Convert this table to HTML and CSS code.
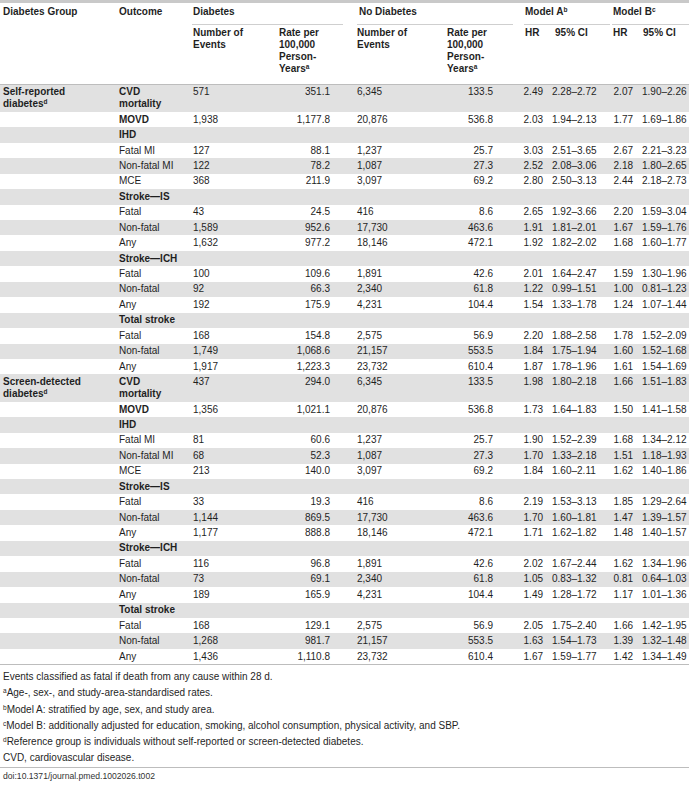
FILE: index.html
```html
<!DOCTYPE html>
<html lang="en">
<head>
    <meta charset="UTF-8">
    <meta name="viewport" content="width=device-width, initial-scale=1.0">
    <title>Table 2</title>
    <link rel="stylesheet" href="styles.css">
</head>
<body>
    <div class="table-wrap">
        <table class="data-table">
            <colgroup>
                <col class="c-group">
                <col class="c-outcome">
                <col class="c-events">
                <col class="c-rate">
                <col class="c-events2">
                <col class="c-rate2">
                <col class="c-hr">
                <col class="c-ci">
                <col class="c-hr2">
                <col class="c-ci2">
            </colgroup>
            <thead>
                <tr class="head-top">
                    <th>Diabetes Group</th>
                    <th>Outcome</th>
                    <th colspan="2" class="span span-dia"><div>Diabetes</div></th>
                    <th colspan="2" class="span span-nodia"><div>No Diabetes</div></th>
                    <th colspan="2" class="span span-a"><div>Model A<sup>b</sup></div></th>
                    <th colspan="2" class="span span-b"><div>Model B<sup>c</sup></div></th>
                </tr>
                <tr class="head-sub">
                    <th></th>
                    <th></th>
                    <th>Number of Events</th>
                    <th>Rate per 100,000 Person-<span>Years<sup>a</sup></span></th>
                    <th>Number of Events</th>
                    <th>Rate per 100,000 Person-<span>Years<sup>a</sup></span></th>
                    <th class="short">HR</th>
                    <th class="short ci">95% CI</th>
                    <th class="short">HR</th>
                    <th class="short">95% CI</th>
                </tr>
            </thead>
            <tbody id="rows"></tbody>
        </table>
    </div>
    <div class="notes">
        <p>Events classified as fatal if death from any cause within 28 d.</p>
        <p><sup>a</sup>Age-, sex-, and study-area-standardised rates.</p>
        <p><sup>b</sup>Model A: stratified by age, sex, and study area.</p>
        <p><sup>c</sup>Model B: additionally adjusted for education, smoking, alcohol consumption, physical activity, and SBP.</p>
        <p><sup>d</sup>Reference group is individuals without self-reported or screen-detected diabetes.</p>
        <p>CVD, cardiovascular disease.</p>
    </div>
    <div class="doi">doi:10.1371/journal.pmed.1002026.t002</div>
    <script src="script.js"></script>
</body>
</html>
```
FILE: styles.css
```css
*{
    margin: 0;
    padding: 0;
    box-sizing: border-box;
}
body{
    font-family: "Liberation Sans", Arial, sans-serif;
    font-size: 10px;
    color: #1f1f1f;
    background: #fff;
    width: 689px;
}
.data-table{
    width: 689px;
    table-layout: fixed;
    border-collapse: collapse;
    border-top: 3px solid #c9c9c9;
    border-bottom: 1px solid #bdbdbd;
}
.c-group{ width: 116px; }
.c-outcome{ width: 74px; }
.c-events{ width: 86px; }
.c-rate{ width: 78px; }
.c-events2{ width: 90px; }
.c-rate2{ width: 78px; }
.c-hr{ width: 27px; }
.c-ci{ width: 61px; }
.c-hr2{ width: 30px; }
.c-ci2{ width: 49px; }

.data-table th,
.data-table td{
    text-align: left;
    vertical-align: top;
    line-height: 12px;
    padding: 1.72px 8px 1.72px 3px;
    font-weight: normal;
}
.data-table th{
    font-weight: bold;
}
sup{
    font-size: 6.5px;
    line-height: 0;
    vertical-align: 3px;
}
.head-top th{
    padding-top: 3px;
    padding-bottom: 0;
    white-space: nowrap;
}
.head-top th.span{
    padding-left: 2px;
    padding-right: 0;
}
.span div{
    border-bottom: 1px solid #cfcfcf;
    padding: 0 0 5.5px 1px;
}
.span-dia div{ margin-right: 11px; }
.span-nodia div{ margin: 0 9px 0 1px; padding-left: 2px; }
.head-sub th{
    padding: 2.5px 14px 8.5px 3px;
    border-bottom: 1px solid #bdbdbd;
}
.head-sub th.short{
    padding-right: 0;
    white-space: nowrap;
}
.head-sub th.ci{ padding-left: 6px; }

.data-table tbody tr:nth-child(odd){
    background: #e1e1e1;
}
.data-table td.bold{
    font-weight: bold;
}
.data-table td.group{
    padding-right: 14px;
}
.data-table td.num{
    text-align: right;
}
.data-table td.rate{ padding-right: 24px; }
.data-table td.rate2{ padding-right: 29px; }
.data-table td.hr{ padding-right: 6px; padding-left: 0; }
.data-table td.hr2{ padding-right: 7px; padding-left: 0; }
.data-table td.ci{ padding-left: 3px; padding-right: 0; white-space: nowrap; }
.data-table td.ci2{ padding-left: 2px; padding-right: 0; white-space: nowrap; }

.notes{
    padding: 4px 3px 0;
}
.notes p{
    line-height: 16.2px;
}
.doi{
    margin-top: 1px;
    border-top: 1px solid #bdbdbd;
    padding: 3px 3px 0;
    font-size: 8.6px;
    line-height: 10px;
    color: #333;
}
```
FILE: script.js
```js
const rows = document.getElementById('rows');

// [outcome, bold?, events, rate, noEvents, noRate, hrA, ciA, hrB, ciB]
const groups = [
    {
        first: 'Self-reported',
        second: 'diabetes',
        data: [
            ['CVD mortality', 1, '571', '351.1', '6,345', '133.5', '2.49', '2.28–2.72', '2.07', '1.90–2.26'],
            ['MOVD', 1, '1,938', '1,177.8', '20,876', '536.8', '2.03', '1.94–2.13', '1.77', '1.69–1.86'],
            ['IHD', 1],
            ['Fatal MI', 0, '127', '88.1', '1,237', '25.7', '3.03', '2.51–3.65', '2.67', '2.21–3.23'],
            ['Non-fatal MI', 0, '122', '78.2', '1,087', '27.3', '2.52', '2.08–3.06', '2.18', '1.80–2.65'],
            ['MCE', 0, '368', '211.9', '3,097', '69.2', '2.80', '2.50–3.13', '2.44', '2.18–2.73'],
            ['Stroke—IS', 1],
            ['Fatal', 0, '43', '24.5', '416', '8.6', '2.65', '1.92–3.66', '2.20', '1.59–3.04'],
            ['Non-fatal', 0, '1,589', '952.6', '17,730', '463.6', '1.91', '1.81–2.01', '1.67', '1.59–1.76'],
            ['Any', 0, '1,632', '977.2', '18,146', '472.1', '1.92', '1.82–2.02', '1.68', '1.60–1.77'],
            ['Stroke—ICH', 1],
            ['Fatal', 0, '100', '109.6', '1,891', '42.6', '2.01', '1.64–2.47', '1.59', '1.30–1.96'],
            ['Non-fatal', 0, '92', '66.3', '2,340', '61.8', '1.22', '0.99–1.51', '1.00', '0.81–1.23'],
            ['Any', 0, '192', '175.9', '4,231', '104.4', '1.54', '1.33–1.78', '1.24', '1.07–1.44'],
            ['Total stroke', 1],
            ['Fatal', 0, '168', '154.8', '2,575', '56.9', '2.20', '1.88–2.58', '1.78', '1.52–2.09'],
            ['Non-fatal', 0, '1,749', '1,068.6', '21,157', '553.5', '1.84', '1.75–1.94', '1.60', '1.52–1.68'],
            ['Any', 0, '1,917', '1,223.3', '23,732', '610.4', '1.87', '1.78–1.96', '1.61', '1.54–1.69']
        ]
    },
    {
        first: 'Screen-detected',
        second: 'diabetes',
        data: [
            ['CVD mortality', 1, '437', '294.0', '6,345', '133.5', '1.98', '1.80–2.18', '1.66', '1.51–1.83'],
            ['MOVD', 1, '1,356', '1,021.1', '20,876', '536.8', '1.73', '1.64–1.83', '1.50', '1.41–1.58'],
            ['IHD', 1],
            ['Fatal MI', 0, '81', '60.6', '1,237', '25.7', '1.90', '1.52–2.39', '1.68', '1.34–2.12'],
            ['Non-fatal MI', 0, '68', '52.3', '1,087', '27.3', '1.70', '1.33–2.18', '1.51', '1.18–1.93'],
            ['MCE', 0, '213', '140.0', '3,097', '69.2', '1.84', '1.60–2.11', '1.62', '1.40–1.86'],
            ['Stroke—IS', 1],
            ['Fatal', 0, '33', '19.3', '416', '8.6', '2.19', '1.53–3.13', '1.85', '1.29–2.64'],
            ['Non-fatal', 0, '1,144', '869.5', '17,730', '463.6', '1.70', '1.60–1.81', '1.47', '1.39–1.57'],
            ['Any', 0, '1,177', '888.8', '18,146', '472.1', '1.71', '1.62–1.82', '1.48', '1.40–1.57'],
            ['Stroke—ICH', 1],
            ['Fatal', 0, '116', '96.8', '1,891', '42.6', '2.02', '1.67–2.44', '1.62', '1.34–1.96'],
            ['Non-fatal', 0, '73', '69.1', '2,340', '61.8', '1.05', '0.83–1.32', '0.81', '0.64–1.03'],
            ['Any', 0, '189', '165.9', '4,231', '104.4', '1.49', '1.28–1.72', '1.17', '1.01–1.36'],
            ['Total stroke', 1],
            ['Fatal', 0, '168', '129.1', '2,575', '56.9', '2.05', '1.75–2.40', '1.66', '1.42–1.95'],
            ['Non-fatal', 0, '1,268', '981.7', '21,157', '553.5', '1.63', '1.54–1.73', '1.39', '1.32–1.48'],
            ['Any', 0, '1,436', '1,110.8', '23,732', '610.4', '1.67', '1.59–1.77', '1.42', '1.34–1.49']
        ]
    }
];

const cls = ['', 'num rate', '', 'num rate2', 'num hr', 'ci', 'num hr2', 'ci2'];

let html = '';
for (const g of groups) {
    g.data.forEach((r, i) => {
        const first = i === 0
            ? `<td class="bold group">${g.first} <span>${g.second}<sup>d</sup></span></td>`
            : '<td></td>';
        let cells = `<td class="${r[1] ? 'bold' : ''}">${r[0]}</td>`;
        for (let k = 0; k < 8; k++) {
            cells += `<td class="${cls[k]}">${r[k + 2] || ''}</td>`;
        }
        html += `<tr>${first}${cells}</tr>`;
    });
}
rows.innerHTML = html;
```
